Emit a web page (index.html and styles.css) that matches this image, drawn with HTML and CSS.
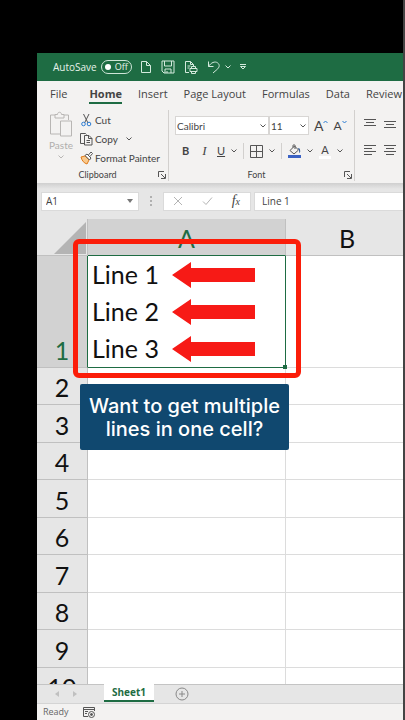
FILE: index.html
```html
<!DOCTYPE html>
<html lang="en">
<head>
<meta charset="UTF-8">
<meta name="viewport" content="width=device-width, initial-scale=1.0">
<title>Sheet1</title>
<link rel="stylesheet" href="styles.css">
</head>
<body>
<div class="app">
	<header class="titlebar">
		<span>AutoSave</span>
		<button class="toggle" type="button"><i></i>Off</button>
		<div class="quick">
			<button type="button" aria-label="New"><svg width="12" height="14" viewBox="0 0 12 14"><path d="M1.5 1.5h5l4 4v7h-9zM6.500 1.500v4h4"/></svg></button>
			<button type="button" aria-label="Save"><svg width="14" height="14" viewBox="0 0 14 14"><path d="M1 1h12v12H3l-2-2zM3.500 1v5h7V1M4 13V9h6v4M6 11v2"/></svg></button>
			<button type="button" aria-label="Print preview"><svg width="14" height="14" viewBox="0 0 14 14"><path d="M5 12.500H1.500v-11h5l3 3V6M6.500 1.500v3h3M3.500 6h3M3.500 8h2M6 8.500h7v3H6zM7.500 8.500v-2h4v2M7.500 11.500v2h4v-2"/></svg></button>
			<button type="button" aria-label="Undo"><svg width="14" height="14" viewBox="0 0 14 14"><path d="M1.500 1.500v5h5M1.500 6.500C4 2.500 8 1 10.500 2.800c3 2.200 1.500 5-.5 6.700L6 13"/></svg><svg width="6" height="4" viewBox="0 0 6 4"><path d="M.5.500L3 3 5.500.500"/></svg></button>
			<button type="button" aria-label="Customize"><svg width="6" height="6" viewBox="0 0 6 6"><path d="M0 .5h6M.5 2.500h5L3 5z"/></svg></button>
		</div>
	</header>

	<nav class="tabs">
		<a href="#">File</a>
		<a href="#" class="active">Home</a>
		<a href="#">Insert</a>
		<a href="#">Page Layout</a>
		<a href="#">Formulas</a>
		<a href="#">Data</a>
		<a href="#">Review</a>
	</nav>

	<div class="ribbon">
		<section class="group clipboard">
			<div class="group-body">
				<button class="paste" type="button">
					<svg width="24" height="26" viewBox="0 0 24 26"><path d="M6 4H1.500v19H11M15 4h4.500v5M6 7V3.500h2.500C8.500.500 12.500.500 12.500 3.500H15V7zM11.500 10h11v15h-11z"/></svg>
					<span>Paste</span>
					<svg class="chev" width="6" height="4" viewBox="0 0 6 4"><path d="M.5.500L3 3 5.500.500"/></svg>
				</button>
				<div class="clip-list">
					<button type="button">
						<svg width="13" height="14" viewBox="0 0 13 14"><path stroke="#555" d="M3.500 1l4.500 9M9 1L4.500 10"/><circle cx="3.500" cy="11" r="1.800" stroke="#2b7cd3"/><circle cx="9" cy="11" r="1.800" stroke="#2b7cd3"/></svg>Cut
					</button>
					<button type="button">
						<svg width="13" height="14" viewBox="0 0 13 14"><path stroke="#555" d="M4 11.500H.5V1.500h5l1 1M4.500 3.500h4.500l3 3v6.500H4.500zM8.500 3.500v3h3.500M6.500 8.500h3.500M6.500 10.500h3.500"/></svg>Copy
						<svg class="chev" width="6" height="4" viewBox="0 0 6 4"><path d="M.5.500L3 3 5.500.500"/></svg>
					</button>
					<button type="button">
						<svg width="13" height="14" viewBox="0 0 13 14"><path fill="#f9c98c" stroke="#e07b1a" d="M1 6l4-1 4 4-2 4C4 12 2 10 1 6z"/><path fill="#fff" stroke="#555" d="M5 4.500l2-1.500 4 4-1.500 2zM8.500 4L11 1l1.500 1.500-2.500 3"/></svg>Format Painter
					</button>
				</div>
			</div>
			<footer><span>Clipboard</span><svg class="launch" width="8" height="8" viewBox="0 0 8 8"><path d="M.5 6V.5H6M3 3l4 4M7.500 3v4.500H3"/></svg></footer>
		</section>

		<section class="group font">
			<div class="group-body font-rows">
				<div class="row selects">
					<label class="pick family"><select aria-label="Font"><option>Calibri</option></select><svg class="chev" width="6" height="4" viewBox="0 0 6 4"><path d="M.5.500L3 3 5.500.500"/></svg></label>
					<label class="pick size"><select aria-label="Font size"><option>11</option></select><svg class="chev" width="6" height="4" viewBox="0 0 6 4"><path d="M.5.500L3 3 5.500.500"/></svg></label>
					<button class="grow" type="button" aria-label="Increase font size">A<svg width="5" height="4" viewBox="0 0 5 4"><path d="M.5 3l2-2 2 2"/></svg></button>
					<button class="shrink" type="button" aria-label="Decrease font size">A<svg width="5" height="4" viewBox="0 0 5 4"><path d="M.5 1l2 2 2-2"/></svg></button>
				</div>
				<div class="row styles">
					<button type="button"><b>B</b></button>
					<button type="button"><em>I</em></button>
					<button type="button"><u>U</u><svg class="chev" width="6" height="4" viewBox="0 0 6 4"><path d="M.5.500L3 3 5.500.500"/></svg></button>
					<span class="sep"></span>
					<button type="button" aria-label="Borders"><svg width="13" height="13" viewBox="0 0 13 13"><path d="M.5.500h12v12H.5zM6.500.500v12M.5 6.500h12"/></svg><svg class="chev" width="6" height="4" viewBox="0 0 6 4"><path d="M.5.500L3 3 5.500.500"/></svg></button>
					<span class="sep"></span>
					<button type="button" aria-label="Fill color"><svg width="13" height="14" viewBox="0 0 13 14"><path d="M2 6.500L6.500 2l4 4-4.500 4zM5 3.500V1.500c0-1 2-1 2 0V5"/><path fill="#2b579a" stroke="#2b579a" d="M10.500 4c1 1 1.500 3 1 4.500"/><path fill="#3b62c4" stroke="none" d="M0 11h13v3H0z"/></svg><svg class="chev" width="6" height="4" viewBox="0 0 6 4"><path d="M.5.500L3 3 5.500.500"/></svg></button>
					<button type="button" aria-label="Font color"><span class="ink">A</span><svg class="chev" width="6" height="4" viewBox="0 0 6 4"><path d="M.5.500L3 3 5.500.500"/></svg></button>
				</div>
			</div>
			<footer><span>Font</span><svg class="launch" width="8" height="8" viewBox="0 0 8 8"><path d="M.5 6V.5H6M3 3l4 4M7.500 3v4.500H3"/></svg></footer>
		</section>

		<section class="group align">
			<div class="group-body align-grid">
				<button type="button" aria-label="Top align"><svg width="12" height="12" viewBox="0 0 12 12"><path d="M0 1.500h12M2 4.500h8M0 7.500h12"/></svg></button>
				<button type="button" aria-label="Middle align"><svg width="12" height="12" viewBox="0 0 12 12"><path d="M0 3.500h12M2 6.500h8M0 9.500h12"/></svg></button>
				<button type="button" aria-label="Align left"><svg width="12" height="12" viewBox="0 0 12 12"><path d="M0 1.500h12M0 4.500h8M0 7.500h12M0 10.500h8"/></svg></button>
				<button type="button" aria-label="Center"><svg width="12" height="12" viewBox="0 0 12 12"><path d="M0 1.500h12M2 4.500h8M0 7.500h12M2 10.500h8"/></svg></button>
			</div>
		</section>
	</div>

	<div class="formula-bar">
		<label class="namebox"><input type="text" value="A1" aria-label="Name box"><svg width="6" height="4" viewBox="0 0 6 4"><path d="M0 0h6L3 4z"/></svg></label>
		<svg class="dots" width="2" height="10" viewBox="0 0 2 10"><path d="M0 0h2v2H0zM0 4h2v2H0zM0 8h2v2H0z"/></svg>
		<div class="fx">
			<button type="button" aria-label="Cancel"><svg width="10" height="10" viewBox="0 0 10 10"><path d="M1 1l8 8M9 1L1 9"/></svg></button>
			<button type="button" aria-label="Enter"><svg width="11" height="10" viewBox="0 0 11 10"><path d="M1 5.500L4 8.500 10 1.500"/></svg></button>
			<button type="button"><i>f<small>x</small></i></button>
		</div>
		<input class="formula" type="text" value="Line 1" aria-label="Formula">
	</div>

	<main class="sheet">
		<table>
			<colgroup><col class="col-num"><col class="col-a"><col></colgroup>
			<thead>
				<tr>
					<th class="corner"><svg width="32" height="32" viewBox="0 0 32 32"><path d="M32 0v32H0z"/></svg></th>
					<th class="on">A</th>
					<th>B</th>
				</tr>
			</thead>
			<tbody>
				<tr class="tall">
					<th class="on">1</th>
					<td class="selected">
						<div class="line">Line 1<svg width="83" height="26" viewBox="0 0 83 26"><path d="M0 13L19 0v6h64v14H19v6z"/></svg></div>
						<div class="line">Line 2<svg width="83" height="26" viewBox="0 0 83 26"><path d="M0 13L19 0v6h64v14H19v6z"/></svg></div>
						<div class="line">Line 3<svg width="83" height="26" viewBox="0 0 83 26"><path d="M0 13L19 0v6h64v14H19v6z"/></svg></div>
						<span class="handle"></span>
					</td>
					<td></td>
				</tr>
				<tr><th>2</th><td></td><td></td></tr>
				<tr><th>3</th><td></td><td></td></tr>
				<tr><th>4</th><td></td><td></td></tr>
				<tr><th>5</th><td></td><td></td></tr>
				<tr><th>6</th><td></td><td></td></tr>
				<tr><th>7</th><td></td><td></td></tr>
				<tr><th>8</th><td></td><td></td></tr>
				<tr><th>9</th><td></td><td></td></tr>
				<tr><th>10</th><td></td><td></td></tr>
			</tbody>
		</table>
		<div class="frame"></div>
		<div class="callout">Want to get multiple<br>lines in one cell?</div>
	</main>

	<div class="sheet-tabs">
		<button type="button" aria-label="Previous sheet"><svg width="4" height="6" viewBox="0 0 4 6"><path d="M4 0v6L0 3z"/></svg></button>
		<button type="button" aria-label="Next sheet"><svg width="4" height="6" viewBox="0 0 4 6"><path d="M0 0v6l4-3z"/></svg></button>
		<a href="#">Sheet1</a>
		<button class="add" type="button" aria-label="New sheet"><svg width="14" height="14" viewBox="0 0 14 14"><circle cx="7" cy="7" r="6"/><path d="M7 4v6M4 7h6"/></svg></button>
	</div>

	<footer class="status">
		<span>Ready</span>
		<svg width="12" height="11" viewBox="0 0 12 11"><path d="M5 9.500H.5v-9h11V4M.5 2.500h11M2 4.500h3M2 6.500h2"/><circle cx="8.500" cy="7.500" r="3"/><circle class="dot" cx="8.500" cy="7.500" r="1"/></svg>
	</footer>
</div>
</body>
</html>
```
FILE: styles.css
```css
* {
	box-sizing: border-box;
}
body {
	margin: 0;
	background: #000;
	color: #444;
	font: 11px/16px "Open Sans", "Noto Sans", sans-serif;
}
button, input, select {
	margin: 0;
	padding: 0;
	border: 0;
	background: none;
	color: inherit;
	font: inherit;
}
a {
	color: inherit;
	text-decoration: none;
}
svg {
	flex: none;
	fill: none;
	stroke: #555;
}
button {
	display: flex;
	align-items: center;
}
.app {
	display: flex;
	flex-direction: column;
	height: 100vh;
	padding: 53px 0 0 37px;
	border-right: 2px solid #444;
}

/* title bar */
.titlebar {
	display: flex;
	flex: none;
	align-items: center;
	height: 28px;
	padding-left: 16px;
	background: #1e6c43;
	color: #e6f2ea;
	font-size: 10px;
}
.toggle {
	gap: 4px;
	height: 14px;
	margin-left: 4px;
	padding: 0 3px;
	border: 1px solid #cfe5d8;
	border-radius: 7px;
	font-size: 9px;
	line-height: 12px;
}
.toggle i {
	width: 6px;
	height: 6px;
	border-radius: 50%;
	background: #fff;
}
.quick {
	display: flex;
	gap: 9px;
	margin-left: 8px;
}
.quick button {
	gap: 4px;
}
.quick svg {
	stroke: #d4eadd;
}

/* ribbon */
.tabs {
	display: flex;
	flex: none;
	gap: 16px;
	height: 26px;
	padding: 4px 0 0 13px;
	background: #f3f2f1;
	white-space: nowrap;
}
.tabs a {
	height: 19px;
	line-height: 18px;
}
.tabs a:first-child {
	margin-right: 6px;
}
.tabs .active {
	border-bottom: 2px solid #1e6c43;
	font-weight: 700;
}
.ribbon {
	display: flex;
	flex: none;
	height: 76px;
	padding: 3px 0 2px;
	background: #f3f2f1;
	font-family: Lato, "Open Sans", sans-serif;
	font-size: 10px;
	white-space: nowrap;
}
.group {
	display: flex;
	flex: none;
	flex-direction: column;
	border-right: 1px solid #d2d0ce;
}
.group-body {
	display: flex;
	height: 59px;
}
.group footer {
	display: flex;
	align-items: center;
	height: 14px;
	margin-top: auto;
	padding: 2px 2px 0 0;
	font-size: 9px;
	line-height: 12px;
}
.group footer span {
	flex: 1;
	text-align: center;
}
.clipboard {
	width: 132px;
}
.font {
	width: 186px;
}
.align {
	flex: 1;
	border-right: 0;
}
.paste {
	flex-direction: column;
	width: 26px;
	margin-left: 11px;
	padding-top: 1px;
	color: #b0aeac;
}
.paste svg {
	stroke: #b8b6b4;
}
.paste .chev {
	margin-top: 2px;
}
.clip-list {
	display: flex;
	flex-direction: column;
	margin-left: 6px;
}
.clip-list button {
	gap: 2px;
	height: 19px;
}
.clip-list .chev {
	margin-left: 6px;
}
.font-rows {
	flex-direction: column;
	gap: 7px;
	padding: 6px 0 0 6px;
}
.row {
	display: flex;
	align-items: center;
}
.selects {
	height: 19px;
}
.pick {
	display: flex;
	align-items: center;
	height: 19px;
	padding: 0 2px 0 1px;
	border: 1px solid #d8d6d4;
	background: #fff;
}
.pick select {
	flex: 1;
	min-width: 0;
	appearance: none;
}
.family {
	width: 94px;
}
.size {
	width: 40px;
}
.grow, .shrink {
	align-items: flex-start;
	margin-left: 5px;
	font-size: 14px;
}
.shrink {
	font-size: 12px;
}
.grow svg, .shrink svg {
	margin-top: 2px;
	stroke: #2b7cd3;
}
.styles {
	gap: 6px;
	height: 18px;
	padding-left: 4px;
	font-size: 11px;
}
.styles button {
	gap: 6px;
	justify-content: center;
	min-width: 13px;
}
.styles em {
	font-family: "Liberation Serif", serif;
	font-size: 13px;
}
.sep {
	width: 1px;
	height: 16px;
	background: #d2d0ce;
}
.ink {
	width: 12px;
	height: 16px;
	border-bottom: 3px solid #fff;
	line-height: 13px;
	text-align: center;
}
.align-grid {
	display: grid;
	grid-template-columns: 12px 12px;
	gap: 14px 8px;
	align-content: start;
	padding: 8px 0 0 9px;
}

/* formula bar */
.formula-bar {
	display: flex;
	flex: none;
	align-items: center;
	height: 36px;
	padding-left: 4px;
	background: linear-gradient(#cfcfcf, #e6e6e6 6px);
	font-size: 10px;
}
.namebox {
	display: flex;
	align-items: center;
	width: 98px;
	height: 19px;
	padding: 0 5px 0 4px;
	border: 1px solid #dadada;
	background: #fff;
}
.namebox input {
	flex: 1;
	min-width: 0;
}
.namebox svg, .dots {
	fill: #777;
	stroke: none;
}
.dots {
	margin: 0 11px;
	fill: #b0b0b0;
}
.fx {
	display: flex;
	align-items: center;
	justify-content: space-between;
	width: 88px;
	height: 19px;
	padding: 0 10px 0 9px;
	border: 1px solid #dadada;
	background: #fff;
}
.fx svg {
	stroke: #b4b4b4;
}
.fx i {
	font: italic 14px/16px "Liberation Serif", serif;
}
.fx small {
	font-size: 10px;
}
.formula {
	flex: 1;
	min-width: 0;
	height: 19px;
	margin-left: 3px;
	padding-left: 7px;
	border: 1px solid #dadada;
	border-right: 0;
	background: #fff;
}

/* sheet */
.sheet {
	position: relative;
	flex: 1;
	min-height: 0;
	overflow: hidden;
	background: #fff;
	color: #111;
	font: 25px/30px Lato, "Open Sans", sans-serif;
}
table {
	width: calc(100% + 6px);
	border-spacing: 0;
	table-layout: fixed;
}
.col-num {
	width: 51px;
}
.col-a {
	width: 198px;
}
th, td {
	height: 38px;
	padding: 0;
	border-right: 1px solid #dcdcdc;
	border-bottom: 1px solid #dcdcdc;
}
th {
	padding-bottom: 2px;
	border-color: #c0c0c0;
	background: #e6e6e6;
	font-weight: 400;
	vertical-align: bottom;
}
tbody tr:nth-child(even) th,
tbody tr:nth-child(even) td {
	height: 37px;
}
thead th {
	height: 37px;
}
.corner {
	padding: 0 1px 1px 0;
	text-align: right;
}
.corner svg {
	display: block;
	margin-left: auto;
	fill: #b4b4b4;
	stroke: none;
}
th.on {
	background: #d2d2d2;
	color: #1e6c43;
}
thead .on {
	border-bottom-color: #1e6c43;
}
tbody .on {
	border-right-color: #1e6c43;
}
.selected {
	position: relative;
	padding-left: 4px;
	border-color: #1e6c43;
}
.line {
	display: flex;
	gap: 13px;
	align-items: center;
	line-height: 37px;
}
.line svg {
	fill: #f71a16;
	stroke: none;
}
.handle {
	position: absolute;
	right: -2px;
	bottom: -2px;
	width: 4px;
	height: 4px;
	background: #1e6c43;
}
.frame {
	position: absolute;
	top: 20px;
	left: 36px;
	width: 228px;
	height: 139px;
	border: 5px solid #fb1d09;
	border-radius: 6px;
}
.callout {
	position: absolute;
	top: 165px;
	left: 43px;
	width: 209px;
	padding: 11px 0 9px;
	border-radius: 2px;
	background: #10486f;
	color: #fff;
	font: 500 20px/23px Inter, sans-serif;
	text-align: center;
	white-space: nowrap;
}

/* bottom bars */
.sheet-tabs {
	display: flex;
	flex: none;
	align-items: center;
	height: 19px;
	padding-left: 18px;
	border-top: 1px solid #c4c4c4;
	background: #e6e6e6;
}
.sheet-tabs button {
	margin-right: 14px;
}
.sheet-tabs svg {
	fill: #c0c0c0;
	stroke: none;
}
.sheet-tabs a {
	height: 18px;
	margin: -2px 21px 0 13px;
	padding: 0 8px;
	border-bottom: 2px solid #1e6c43;
	background: #fff;
	color: #1e6c43;
	font-size: 10px;
	font-weight: 700;
}
.sheet-tabs .add svg {
	fill: none;
	stroke: #888;
}
.status {
	display: flex;
	flex: none;
	gap: 14px;
	align-items: center;
	height: 17px;
	padding-left: 6px;
	border-top: 1px solid #d4d4d4;
	background: #f3f2f1;
	color: #666;
	font-size: 9px;
}
.status .dot {
	fill: #555;
}
```
